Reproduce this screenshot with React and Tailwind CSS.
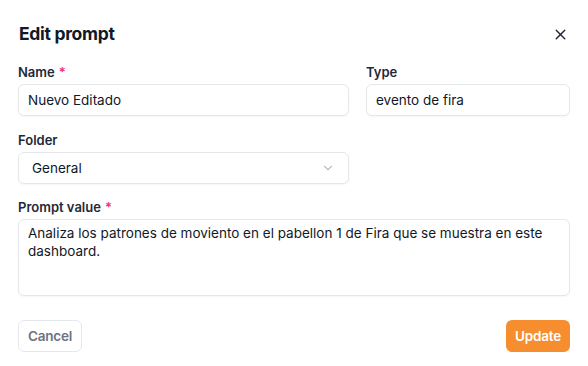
import React from 'react'
import { X, ChevronDown } from 'lucide-react'

const Label = ({ children, required }) => (
  <label className="block text-[13px] leading-5 font-semibold text-[#1f2937] mb-0.5">
    {children}
    {required && <span className="text-[#e8336b] ml-1">*</span>}
  </label>
)

const inputCls =
  'h-8 w-full rounded-md border border-[#e5e7eb] bg-white shadow-[0_1px_2px_rgba(0,0,0,0.04)] flex items-center text-[13.5px] text-[#111827]'

export default function App() {
  return (
    <div className="w-[588px] h-[366px] bg-white font-['Inter',sans-serif] px-[18px] pt-5">
      <div className="flex items-center justify-between h-7">
        <h2 className="text-[17.5px] leading-7 font-bold text-[#111827] tracking-[-0.3px] pl-px">Edit prompt</h2>
        <button className="mr-[-3px] p-1 text-[#1f2937]">
          <X size={17} strokeWidth={2} />
        </button>
      </div>

      <div className="grid grid-cols-[331px_1fr] gap-x-[17px] mt-[14px]">
        <div>
          <Label required>Name</Label>
          <div className={inputCls + ' px-[9px]'}>Nuevo Editado</div>
        </div>
        <div>
          <Label>Type</Label>
          <div className={inputCls + ' px-[9px]'}>evento de fira</div>
        </div>
      </div>

      <div className="grid grid-cols-[331px_1fr] gap-x-[17px] mt-[14px]">
        <div>
          <Label>Folder</Label>
          <div className={inputCls + ' pl-[13px] pr-[13px] justify-between'}>
            <span>General</span>
            <ChevronDown size={14} strokeWidth={1.75} className="text-[#9ca3af]" />
          </div>
        </div>
      </div>

      <div className="mt-[13px]">
        <Label required>Prompt value</Label>
        <div className="h-[77px] w-full rounded-md border border-[#e5e7eb] bg-white shadow-[0_1px_2px_rgba(0,0,0,0.04)] px-[9px] pt-[4px] text-[13.5px] leading-[18px] text-[#111827]">
          Analiza los patrones de moviento en el pabellon 1 de Fira que se muestra en este dashboard.
        </div>
      </div>

      <div className="flex items-center justify-between mt-6">
        <button className="h-8 px-[9px] rounded-md border border-[#e5e7eb] bg-white text-[13.5px] font-semibold tracking-[-0.2px] text-[#6b7280]">
          Cancel
        </button>
        <button className="h-8 px-[9px] rounded-md bg-[#f68d2e] text-[13.5px] font-semibold tracking-[-0.2px] text-white">
          Update
        </button>
      </div>
    </div>
  )
}
